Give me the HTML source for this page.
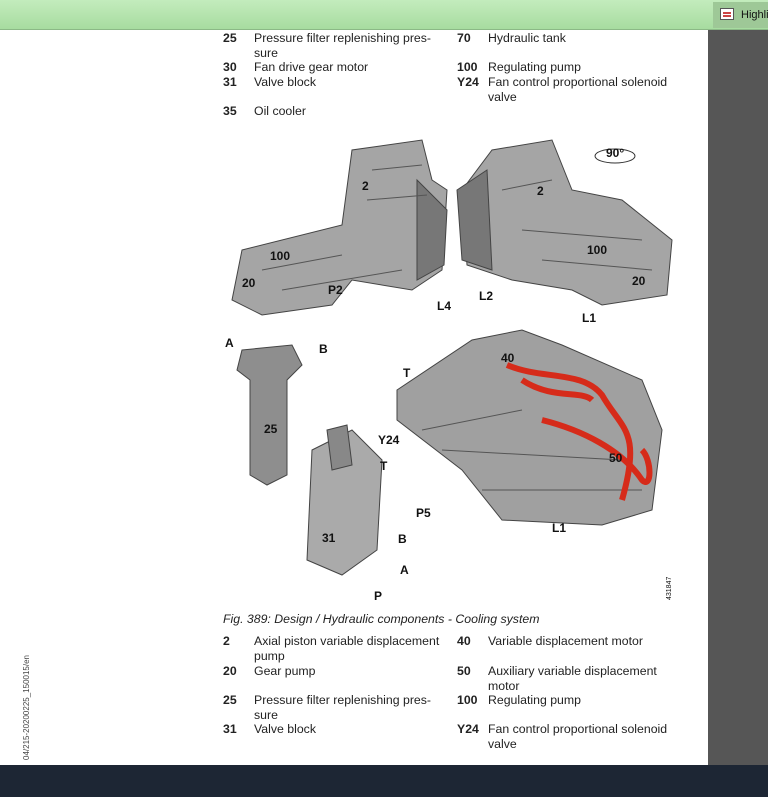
<!DOCTYPE html>
<html><head><meta charset="utf-8"><style>
*{margin:0;padding:0;box-sizing:border-box}
body{width:768px;height:797px;overflow:hidden;background:#fff;font-family:"Liberation Sans",Arial,sans-serif;position:relative;color:#222}
#top{position:absolute;left:0;top:0;width:768px;height:30px;background:linear-gradient(#c3ecbd,#a7dca0);border-bottom:1px solid #8bb986}
#hl{position:absolute;left:713px;top:2px;width:55px;height:26px;background:#9ec897;font-size:11px;color:#111;line-height:26px;padding-left:28px;overflow:hidden;white-space:nowrap}
#hl i{position:absolute;left:7px;top:6px;width:14px;height:12px;border:1px solid #555;background:#fff}
#hl i:before{content:"";position:absolute;left:2px;top:3px;width:8px;height:2px;background:#c44;box-shadow:0 3px 0 #c44}
#side{position:absolute;left:708px;top:30px;width:60px;height:735px;background:#565656}
#bot{position:absolute;left:0;top:765px;width:768px;height:32px;background:#1d2634}
.t{position:absolute;font-size:12.3px;line-height:15px;white-space:nowrap}
.n{font-weight:bold}
#cap{position:absolute;left:223px;top:612px;font-size:12.3px;font-style:italic}
#vert{position:absolute;left:22px;top:760px;transform:rotate(-90deg);transform-origin:0 0;font-size:8px;color:#444;white-space:nowrap}
svg{position:absolute;left:222px;top:130px}
svg text{font-family:"Liberation Sans",Arial,sans-serif;font-weight:bold;font-size:12px;fill:#111}
</style></head><body>
<div id="top"></div><div id="hl"><i></i>Highli</div>
<div id="side"></div><div id="bot"></div>

<div class="t n" style="left:223px;top:31px">25</div><div class="t" style="left:254px;top:31px">Pressure filter replenishing pres-<br>sure</div>
<div class="t n" style="left:223px;top:60px">30</div><div class="t" style="left:254px;top:60px">Fan drive gear motor</div>
<div class="t n" style="left:223px;top:75px">31</div><div class="t" style="left:254px;top:75px">Valve block</div>
<div class="t n" style="left:223px;top:104px">35</div><div class="t" style="left:254px;top:104px">Oil cooler</div>
<div class="t n" style="left:457px;top:31px">70</div><div class="t" style="left:488px;top:31px">Hydraulic tank</div>
<div class="t n" style="left:457px;top:60px">100</div><div class="t" style="left:488px;top:60px">Regulating pump</div>
<div class="t n" style="left:457px;top:75px">Y24</div><div class="t" style="left:488px;top:75px">Fan control proportional solenoid<br>valve</div>

<svg width="455" height="475" viewBox="0 0 455 475">
<g fill="#9a9a9a" stroke="#444" stroke-width="1">
<path d="M20 120 L120 95 L130 20 L200 10 L210 50 L225 60 L220 140 L190 160 L130 150 L110 175 L40 185 L10 170Z" fill="#a5a5a5"/>
<path d="M195 50 L225 80 L222 135 L195 150Z" fill="#777"/>
<path d="M240 60 L270 20 L330 10 L350 60 L400 70 L450 110 L445 165 L380 175 L350 160 L290 150 L245 135Z" fill="#a5a5a5"/>
<path d="M235 60 L265 40 L270 140 L240 130Z" fill="#777"/>
<path d="M20 220 L70 215 L80 235 L65 250 L65 345 L45 355 L28 345 L28 250 L15 240Z" fill="#8e8e8e"/>
<path d="M90 320 L130 300 L160 330 L155 420 L120 445 L85 430Z" fill="#aaa"/>
<path d="M105 300 L125 295 L130 335 L110 340Z" fill="#888"/>
<path d="M175 260 L250 210 L300 200 L340 215 L420 250 L440 300 L430 380 L380 395 L280 390 L240 340 L175 290Z" fill="#a0a0a0"/>
</g>
<g fill="none" stroke="#555" stroke-width="1">
<path d="M40 140 L120 125 M60 160 L180 140 M150 40 L200 35 M145 70 L205 65 M280 60 L330 50 M300 100 L420 110 M320 130 L430 140 M200 300 L300 280 M220 320 L400 330 M260 360 L420 360"/>
</g>
<g fill="none" stroke="#d62b1a" stroke-width="6">
<path d="M285 235 C320 250 360 240 380 265 C400 300 420 300 400 370"/>
<path d="M300 250 C330 270 360 260 370 270"/>
<path d="M320 290 C360 300 400 320 420 350 C430 360 430 330 420 320"/>
</g>
<ellipse cx="393" cy="26" rx="20" ry="7" fill="none" stroke="#333"/>
<text x="384" y="27" font-weight="normal">90°</text>
<text x="140" y="60">2</text><text x="315" y="65">2</text>
<text x="48" y="130">100</text><text x="365" y="124">100</text>
<text x="20" y="157">20</text><text x="410" y="155">20</text>
<text x="106" y="164">P2</text><text x="215" y="180">L4</text>
<text x="257" y="170">L2</text><text x="360" y="192">L1</text>
<text x="3" y="217">A</text><text x="97" y="223">B</text>
<text x="42" y="303">25</text><text x="156" y="314">Y24</text>
<text x="158" y="340">T</text><text x="194" y="387">P5</text>
<text x="176" y="413">B</text><text x="100" y="412">31</text>
<text x="178" y="444">A</text><text x="152" y="470">P</text>
<text x="181" y="247">T</text><text x="279" y="232">40</text>
<text x="387" y="332">50</text><text x="330" y="402">L1</text>
<text x="449" y="470" style="font-size:7px;font-weight:normal" transform="rotate(-90 449 470)">431847</text>
</svg>

<div id="cap">Fig. 389: Design / Hydraulic components - Cooling system</div>
<div class="t n" style="left:223px;top:634px">2</div><div class="t" style="left:254px;top:634px">Axial piston variable displacement<br>pump</div>
<div class="t n" style="left:223px;top:664px">20</div><div class="t" style="left:254px;top:664px">Gear pump</div>
<div class="t n" style="left:223px;top:693px">25</div><div class="t" style="left:254px;top:693px">Pressure filter replenishing pres-<br>sure</div>
<div class="t n" style="left:223px;top:722px">31</div><div class="t" style="left:254px;top:722px">Valve block</div>
<div class="t n" style="left:457px;top:634px">40</div><div class="t" style="left:488px;top:634px">Variable displacement motor</div>
<div class="t n" style="left:457px;top:664px">50</div><div class="t" style="left:488px;top:664px">Auxiliary variable displacement<br>motor</div>
<div class="t n" style="left:457px;top:693px">100</div><div class="t" style="left:488px;top:693px">Regulating pump</div>
<div class="t n" style="left:457px;top:722px">Y24</div><div class="t" style="left:488px;top:722px">Fan control proportional solenoid<br>valve</div>
<div id="vert">04/215-20200225_150015/en</div>
</body></html>
